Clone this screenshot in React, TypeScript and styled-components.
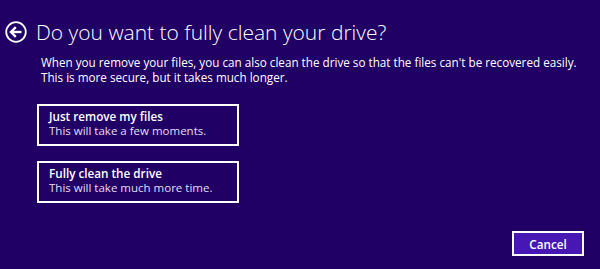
import styled, { createGlobalStyle } from "styled-components";

const GlobalStyle = createGlobalStyle`
  html, body {
    margin: 0;
    padding: 0;
    background: #200064;
  }
  body {
    font-family: "Open Sans", "Noto Sans", sans-serif;
    color: #ffffff;
  }
`;

function BackIcon() {
  return (
    <svg width="22" height="22" viewBox="0 0 22 22">
      <circle cx="11" cy="11" r="9.8" fill="none" stroke="#fff" strokeWidth="1.8" />
      <path d="M6 11 H16.5" stroke="#fff" strokeWidth="2.4" />
      <path d="M10.8 6.2 L6 11 L10.8 15.8" fill="none" stroke="#fff" strokeWidth="2.4" />
    </svg>
  );
}

function App() {
  return (
    <Page>
      <GlobalStyle />
      <Header>
        <BackIcon />
        <Title>Do you want to fully clean your drive?</Title>
      </Header>
      <Body>
        <Intro>
          When you remove your files, you can also clean the drive so that the files can't be
          recovered easily.
          <br />
          This is more secure, but it takes much longer.
        </Intro>
        <Options>
          <Option>
            <OptionTitle>Just remove my files</OptionTitle>
            <OptionText>This will take a few moments.</OptionText>
          </Option>
          <Option>
            <OptionTitle>Fully clean the drive</OptionTitle>
            <OptionText>This will take much more time.</OptionText>
          </Option>
        </Options>
      </Body>
      <Footer>
        <CancelButton>Cancel</CancelButton>
      </Footer>
    </Page>
  );
}

const Page = styled.div`
  width: 600px;
  height: 269px;
  display: flex;
  flex-direction: column;
  box-sizing: border-box;
  padding: 21px 16px 0 5px;
`;

const Header = styled.div`
  display: flex;
  align-items: center;
  gap: 9px;
  height: 22px;
`;

const Title = styled.h1`
  margin: 0;
  font-size: 21px;
  font-weight: 300;
  line-height: 22px;
  white-space: nowrap;
`;

const Body = styled.div`
  padding-left: 32px;
  margin-top: 12px;
  display: flex;
  flex-direction: column;
`;

const Intro = styled.p`
  margin: 0;
  padding-left: 4px;
  font-size: 11.7px;
  line-height: 15px;
  white-space: nowrap;
`;

const Options = styled.div`
  display: flex;
  flex-direction: column;
  gap: 15px;
  margin-top: 19px;
`;

const Option = styled.button`
  width: 202px;
  height: 42px;
  box-sizing: border-box;
  border: 2px solid #ffffff;
  background: transparent;
  color: #ffffff;
  padding: 3px 10px 0;
  text-align: left;
  display: flex;
  flex-direction: column;
  justify-content: flex-start;
  gap: 0;
  font-family: inherit;
  cursor: pointer;
`;

const OptionTitle = styled.span`
  font-size: 11.7px;
  font-weight: 600;
  line-height: 15px;
`;

const OptionText = styled.span`
  font-size: 11.5px;
  line-height: 14px;
  color: #e6def4;
`;

const Footer = styled.div`
  margin-top: auto;
  margin-bottom: 13px;
  display: flex;
  justify-content: flex-end;
`;

const CancelButton = styled.button`
  width: 72px;
  height: 25px;
  box-sizing: border-box;
  border: 2px solid #ffffff;
  background: #4617b4;
  color: #ffffff;
  font-family: inherit;
  font-size: 11.7px;
  font-weight: 600;
  padding: 0;
  cursor: pointer;
`;

export default App;
